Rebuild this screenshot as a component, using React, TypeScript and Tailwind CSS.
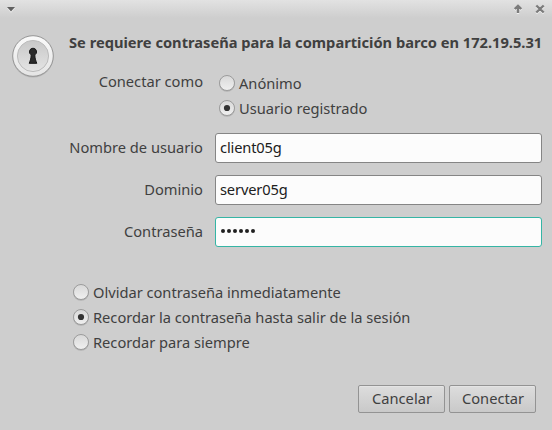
import React, { useState } from 'react';

function Radio({ label, checked, onSelect }: { label: string; checked: boolean; onSelect: () => void }) {
  return (
    <button type="button" role="radio" aria-checked={checked} onClick={onSelect} className="flex h-[25px] items-center gap-1 whitespace-nowrap">
      <svg width="16" height="17" viewBox="0 0 16 17" className="shrink-0 overflow-visible">
        <circle cx="8" cy="8.9" r="7.9" fill="#b0b0b0" />
        <circle cx="8" cy="8" r="7.5" fill="url(#radioFill)" stroke="#959595" strokeWidth="0.9" />
        {checked && <circle cx="8" cy="8" r="3.1" fill="#333333" />}
      </svg>
      <span className="-mt-px leading-5 tracking-[-0.01px]">{label}</span>
    </button>
  );
}

function Field({ label, value, focused = false, password = false }: { label: string; value: string; focused?: boolean; password?: boolean }) {
  return (
    <div className="flex h-[30px] items-center">
      <span className="-mt-0.5 w-[134px] text-right leading-5 whitespace-nowrap">{label}</span>
      <div className={`ml-3 flex h-[30px] w-[327px] items-center rounded-[3px] border bg-[#fcfcfc] pl-1 text-[#202020] ${focused ? 'border-[#35b5a5]' : 'border-[#858585]'}`}>
        {password ? (
          <span className="-mt-0.5 flex gap-[2px] pl-px">
            {value.split('').map((_, i) => (
              <span key={i} className="size-1 rounded-full bg-[#202020]" />
            ))}
          </span>
        ) : (
          <span className="-mt-0.5 leading-5 tracking-[-0.15px]">{value}</span>
        )}
      </div>
    </div>
  );
}

function TitleBar() {
  return (
    <header className="flex h-[18px] items-start justify-between bg-linear-to-b from-[#e2e2e2] to-[#cecece]">
      <svg width="16" height="18" viewBox="0 0 16 18">
        <path d="M7 8h8l-4 4.8z" fill="#f1f1f1" />
        <path d="M7 7h8l-4 4.6z" fill="#606060" />
      </svg>
      <svg width="44" height="18" viewBox="0 0 44 18" fill="none">
        <g stroke="#f0f0f0" strokeWidth="2.4" transform="translate(0 1)">
          <path d="M10 13V6M6.7 9 10 5.8 13.3 9M28.3 5.5l7.4 7M35.7 5.5l-7.4 7" />
        </g>
        <g stroke="#7c7c7c" strokeWidth="2.4">
          <path d="M10 13V6M6.7 9 10 5.8 13.3 9M28.3 5.5l7.4 7M35.7 5.5l-7.4 7" />
        </g>
      </svg>
    </header>
  );
}

function LockIcon() {
  return (
    <svg width="42" height="43" viewBox="0 0 42 43" className="shrink-0">
      <defs>
        <linearGradient id="ring" x2="0" y2="1">
          <stop stopColor="#fafafa" />
          <stop offset="1" stopColor="#e4e4e4" />
        </linearGradient>
        <linearGradient id="plate" x2="0" y2="1">
          <stop stopColor="#c8c8c8" />
          <stop offset="1" stopColor="#e4e4e4" />
        </linearGradient>
        <linearGradient id="radioFill" x2="0" y2="1">
          <stop stopColor="#d8d8d8" />
          <stop offset="1" stopColor="#f0f0f0" />
        </linearGradient>
      </defs>
      <circle cx="21" cy="22" r="20.5" fill="#b4b4b4" />
      <circle cx="21" cy="21" r="20.3" fill="url(#ring)" stroke="#959595" />
      <circle cx="21" cy="21" r="15.6" fill="url(#plate)" stroke="#bcbcbc" />
      <path d="M21 13.2a3.6 3.6 0 0 0-1.8 6.7c-.1 3.2-.8 5.4-2 8.4h7.6c-1.2-3-1.9-5.2-2-8.4A3.6 3.6 0 0 0 21 13.2z" fill="#2b2b2b" stroke="#161616" />
    </svg>
  );
}

const remember = ['Olvidar contraseña inmediatamente', 'Recordar la contraseña hasta salir de la sesión', 'Recordar para siempre'];

export default function App() {
  const [mode, setMode] = useState(1);
  const [keep, setKeep] = useState(1);
  return (
    <div className="h-[430px] w-[552px] overflow-hidden bg-[#cecece] font-['Noto_Sans',sans-serif] text-[14.67px] text-[#404040]">
      <TitleBar />
      <main className="flex pl-3">
        <div className="w-[57px] pt-[17px]">
          <LockIcon />
        </div>
        <div className="w-[473px] pt-[14px]">
          <h1 className="leading-5 font-bold whitespace-nowrap">Se requiere contraseña para la compartición barco en 172.19.5.31</h1>
          <div className="mt-[19px] flex">
            <span className="w-[134px] text-right leading-5">Conectar como</span>
            <div className="ml-4">
              <Radio label="Anónimo" checked={mode === 0} onSelect={() => setMode(0)} />
              <Radio label="Usuario registrado" checked={mode === 1} onSelect={() => setMode(1)} />
            </div>
          </div>
          <div className="mt-3 flex flex-col gap-3">
            <Field label="Nombre de usuario" value="client05g" />
            <Field label="Dominio" value="server05g" />
            <Field label="Contraseña" value="••••••" focused password />
          </div>
          <div className="mt-[33px] ml-1">
            {remember.map((text, i) => (
              <Radio key={text} label={text} checked={keep === i} onSelect={() => setKeep(i)} />
            ))}
          </div>
        </div>
      </main>
      <footer className="mt-[30px] flex justify-end gap-1 pr-4">
        {['Cancelar', 'Conectar'].map((text) => (
          <button key={text} type="button" className="h-7 w-[87px] rounded-[2px] border border-[#939393] bg-linear-to-b from-[#dddddd] to-[#c9c9c9] pb-0.5 pl-px leading-5 shadow-[inset_0_1px_0_#e4e4e4]">
            {text}
          </button>
        ))}
      </footer>
    </div>
  );
}
